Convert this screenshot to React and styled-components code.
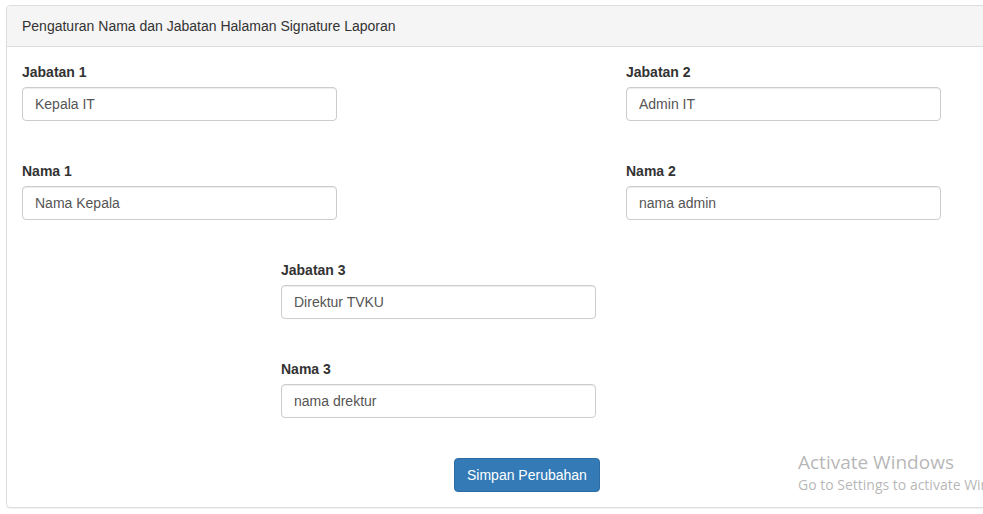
import React from 'react';
import styled, { createGlobalStyle } from 'styled-components';

const GlobalStyle = createGlobalStyle`
  html, body {
    margin: 0;
    padding: 0;
    background: #fff;
    overflow: hidden;
  }
  body {
    font-family: "Liberation Sans", Arial, Helvetica, sans-serif;
    font-size: 14px;
    line-height: 20px;
    color: #333;
  }
  * {
    box-sizing: border-box;
  }
`;

const Page = styled.div`
  position: relative;
  width: 983px;
  height: 514px;
  padding: 5px 0 0 6px;
  overflow: hidden;
`;

const Panel = styled.div`
  width: 1210px;
  background: #fff;
  border: 1px solid #ddd;
  border-radius: 4px;
  box-shadow: 0 1px 1px rgba(0, 0, 0, 0.05);
`;

const PanelHeading = styled.div`
  padding: 10px 15px;
  background: #f5f5f5;
  border-bottom: 1px solid #ddd;
  border-radius: 3px 3px 0 0;
  color: #333;
`;

const PanelBody = styled.div`
  padding: 15px;
  display: flex;
  flex-direction: column;
  gap: 40px;
`;

const Row = styled.div`
  display: grid;
  grid-template-columns: 604px 604px;
`;

const Field = styled.div`
  display: flex;
  flex-direction: column;
  margin-left: ${props => props.offset || 0}px;
`;

const Label = styled.label`
  font-weight: bold;
  margin-bottom: 5px;
  line-height: 20px;
`;

const Input = styled.input`
  width: 315px;
  height: 34px;
  padding: 6px 12px;
  font-family: inherit;
  font-size: 14px;
  line-height: 20px;
  color: #555;
  background: #fff;
  border: 1px solid #ccc;
  border-radius: 4px;
  box-shadow: inset 0 1px 1px rgba(0, 0, 0, 0.075);
  outline: none;
`;

const Actions = styled.div`
  display: flex;
  padding-left: 432px;
`;

const Button = styled.button`
  height: 34px;
  padding: 6px 12px;
  font-family: inherit;
  font-size: 14px;
  line-height: 20px;
  color: #fff;
  background: #337ab7;
  border: 1px solid #2e6da4;
  border-radius: 4px;
  cursor: pointer;
`;

const Watermark = styled.div`
  position: absolute;
  left: 798px;
  top: 449px;
  font-family: "Open Sans", "Noto Sans", sans-serif;
  color: rgba(120, 120, 120, 0.55);
  white-space: nowrap;
  pointer-events: none;
`;

const WatermarkTitle = styled.div`
  font-size: 19px;
  line-height: 26px;
`;

const WatermarkText = styled.div`
  font-size: 14px;
  line-height: 20px;
`;

const pairs = [
  [
    { label: 'Jabatan 1', value: 'Kepala IT' },
    { label: 'Jabatan 2', value: 'Admin IT' }
  ],
  [
    { label: 'Nama 1', value: 'Nama Kepala' },
    { label: 'Nama 2', value: 'nama admin' }
  ]
];

const centered = [
  { label: 'Jabatan 3', value: 'Direktur TVKU' },
  { label: 'Nama 3', value: 'nama drektur' }
];

const App = () => {
  return (
    <Page>
      <GlobalStyle />
      <Panel>
        <PanelHeading>Pengaturan Nama dan Jabatan Halaman Signature Laporan</PanelHeading>
        <PanelBody>
          {pairs.map((row, rowIndex) => (
            <Row key={rowIndex}>
              {row.map(field => (
                <Field key={field.label}>
                  <Label>{field.label}</Label>
                  <Input defaultValue={field.value} />
                </Field>
              ))}
            </Row>
          ))}
          {centered.map(field => (
            <Field key={field.label} offset={259}>
              <Label>{field.label}</Label>
              <Input defaultValue={field.value} />
            </Field>
          ))}
          <Actions>
            <Button>Simpan Perubahan</Button>
          </Actions>
        </PanelBody>
      </Panel>
      <Watermark>
        <WatermarkTitle>Activate Windows</WatermarkTitle>
        <WatermarkText>Go to Settings to activate Windows.</WatermarkText>
      </Watermark>
    </Page>
  );
};

export default App;
